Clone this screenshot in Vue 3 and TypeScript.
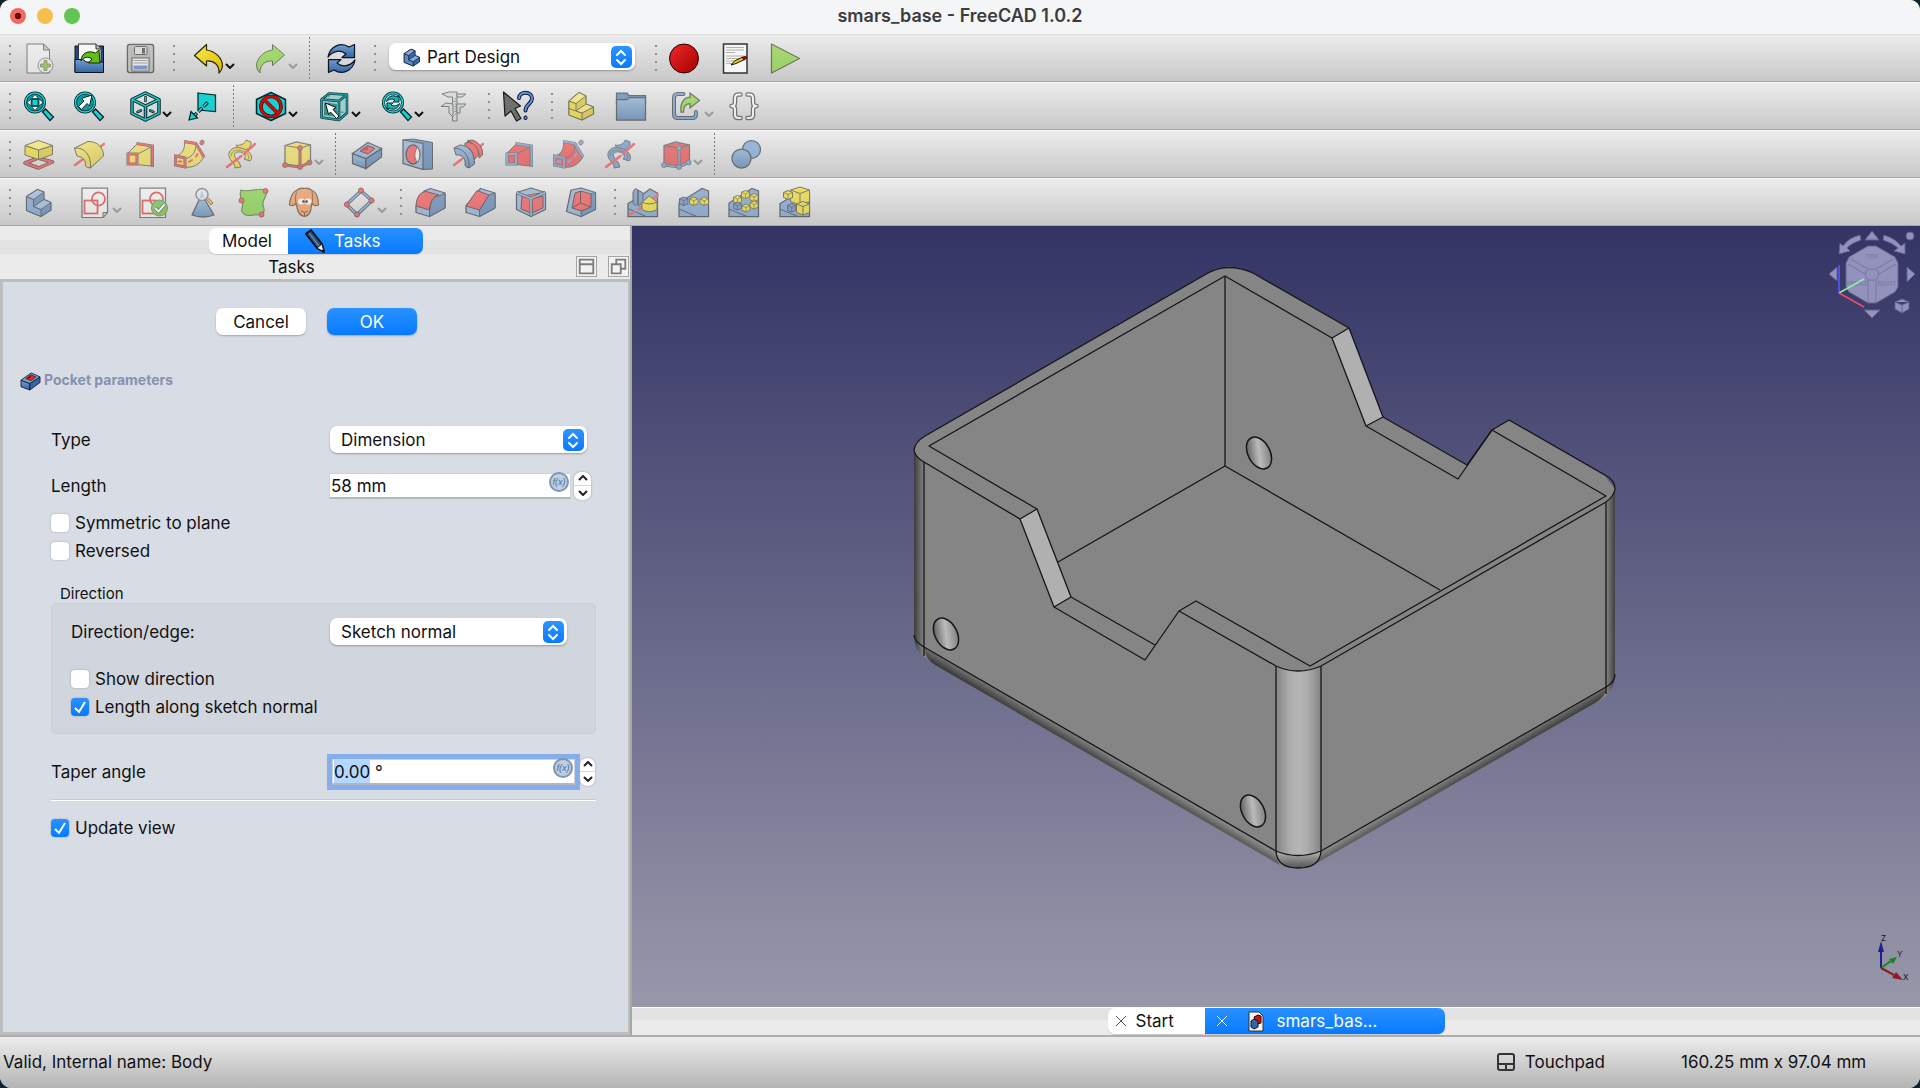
<script setup lang="ts">
import { onMounted, ref } from 'vue'

type ToolKind = 'grip' | 'sep' | 'tool' | 'menu' | 'workbench'

interface ToolItem {
  kind: ToolKind
  icon?: string
  label?: string
  off?: boolean
  tone?: 'sub'
}

const grip: ToolItem = { kind: 'grip' }
const sep: ToolItem = { kind: 'sep' }

function tool(icon: string, label: string, off = false, tone?: 'sub'): ToolItem {
  return { kind: 'tool', icon, label, off, tone }
}

function menu(icon: string, label: string, off = false, tone?: 'sub'): ToolItem {
  return { kind: 'menu', icon, label, off, tone }
}

const toolbars: ToolItem[][] = [
  [
    grip, tool('new', 'New', true), tool('open', 'Open'), tool('save', 'Save', true),
    grip, menu('undo', 'Undo'), menu('redo', 'Redo', true),
    sep, tool('refresh', 'Refresh'),
    grip, { kind: 'workbench' },
    grip, tool('record', 'Record macro'), tool('macro', 'Macros'), tool('play', 'Execute macro', true),
  ],
  [
    grip, tool('fit-all', 'Fit all'), tool('fit-sel', 'Fit selection'), menu('iso', 'Isometric'), tool('align', 'Align to selection'),
    sep, menu('draw-style', 'Draw style'), menu('bbox', 'Selection filter'), menu('zoom-sync', 'Sync view'), tool('caliper', 'Measure', true),
    grip, tool('whats-this', "What's this?"),
    grip, tool('part', 'Part', true), tool('folder', 'Group', true), menu('link', 'Make link', true), tool('braces', 'Variable set', true),
  ],
  [
    grip, tool('pad', 'Pad', true), tool('revolve', 'Revolution', true), tool('loft', 'Additive loft', true),
    tool('pipe', 'Additive pipe', true), tool('helix', 'Additive helix', true), menu('prim', 'Additive primitive', true),
    sep, tool('pocket', 'Pocket', true), tool('hole', 'Hole', true), tool('groove', 'Groove', true),
    tool('loft', 'Subtractive loft', true, 'sub'), tool('pipe', 'Subtractive pipe', true, 'sub'),
    tool('helix', 'Subtractive helix', true, 'sub'), menu('prim', 'Subtractive primitive', true, 'sub'),
    sep, tool('boolean', 'Boolean', true),
  ],
  [
    grip, tool('body', 'Body', true), menu('sketch', 'Sketch', true), tool('validate', 'Validate sketch', true),
    tool('check', 'Check geometry', true), tool('binder', 'Shape binder', true), tool('clone', 'Clone', true), menu('datum', 'Datum', true),
    grip, tool('fillet', 'Fillet', true), tool('chamfer', 'Chamfer', true), tool('draft', 'Draft', true), tool('thickness', 'Thickness', true),
    grip, tool('mirror', 'Mirrored', true), tool('linear', 'Linear pattern', true), tool('polar', 'Polar pattern', true), tool('multi', 'MultiTransform', true),
  ],
]

const length = ref('58 mm')
const taper = ref('0.00 °')
const symmetric = ref(false)
const reversed = ref(false)
const showDirection = ref(false)
const alongNormal = ref(true)
const updateView = ref(true)

const taperInput = ref<HTMLInputElement | null>(null)

onMounted(() => {
  taperInput.value?.focus({ preventScroll: true })
  taperInput.value?.setSelectionRange(0, 4)
})
</script>

<template>
  <div class="window">
    <svg class="defs" width="0" height="0" aria-hidden="true">
      <defs>
        <linearGradient id="g-blue" x1="0" y1="0" x2="0" y2="1"><stop offset="0" stop-color="#729fcf" /><stop offset="1" stop-color="#3465a4" /></linearGradient>
        <linearGradient id="g-red" x1="0" y1="0" x2="1" y2="1"><stop offset="0" stop-color="#ef2929" /><stop offset="1" stop-color="#a40000" /></linearGradient>
        <linearGradient id="g-yellow" x1="0" y1="0" x2="1" y2="1"><stop offset="0" stop-color="#fce94f" /><stop offset="1" stop-color="#d9bd00" /></linearGradient>
      </defs>

      <symbol id="i-new" viewBox="0 0 64 64">
        <path d="M8 4H41L53 16V62H8Z" fill="#f3f4f2" stroke="#2e3436" stroke-width="2" />
        <path d="M41 4V16H53Z" fill="#babdb6" stroke="#2e3436" stroke-width="2" />
        <circle cx="45" cy="47" r="15" fill="#f4f4f4" stroke="#555753" stroke-width="2" />
        <path d="M42 37h6v7h7v6h-7v7h-6v-7h-7v-6h7Z" fill="#73b216" stroke="#33521a" stroke-width="1.500" />
      </symbol>
      <symbol id="i-open" viewBox="0 0 64 64">
        <path d="M4 8H61V60H4Z" fill="#204a87" stroke="#0b1521" stroke-width="2" />
        <path d="M11 4H46L56 14V44H11Z" fill="#f6f6f6" stroke="#2e3436" stroke-width="2" />
        <path d="M46 4V14H56" fill="#babdb6" stroke="#2e3436" stroke-width="2" />
        <path d="M4 35H20L26 40H61V61H4Z" fill="url(#g-blue)" stroke="#0b1521" stroke-width="2" />
        <path d="M16 38C17 22 30 16 45 22L52 16L54 42H31L38 34C30 28 22 30 16 38Z" fill="#5fbf12" stroke="#172a04" stroke-width="2" />
      </symbol>
      <symbol id="i-save" viewBox="0 0 64 64">
        <rect x="7" y="5" width="52" height="56" rx="4" fill="#9c9f9a" stroke="#111" stroke-width="3" />
        <rect x="10" y="8" width="46" height="50" rx="2" fill="none" stroke="#d3d7cf" stroke-width="1.500" />
        <rect x="21" y="9" width="25" height="16" rx="2" fill="#d3d7cf" stroke="#111" stroke-width="2" />
        <rect x="36" y="12" width="6" height="11" fill="#111" />
        <rect x="16" y="32" width="34" height="26" fill="#f3f3f3" stroke="#111" stroke-width="2" />
        <path d="M19 37H47M19 42H47" stroke="#777" stroke-width="2" />
        <rect x="19" y="47" width="28" height="8" fill="#3465c4" />
      </symbol>
      <symbol id="i-undo" viewBox="0 0 64 64">
        <path d="M5 27L29 5V16C46 18 61 32 61 48Q60 57 54 62C55 46 44 37 29 38V48Z" fill="url(#g-yellow)" stroke="#302b00" stroke-width="2.500" stroke-linejoin="round" />
      </symbol>
      <symbol id="i-redo" viewBox="0 0 64 64">
        <path d="M59 26L35 5V16C18 18 3 32 3 48Q4 57 10 62C9 46 20 37 35 38V47Z" fill="#73d216" stroke="#172a04" stroke-width="2" stroke-linejoin="round" />
      </symbol>
      <symbol id="i-refresh" viewBox="0 0 64 64">
        <path d="M6 30C10 8 32 -1 48 10L59 5V31H34L42 24C32 15 16 17 6 30Z" fill="url(#g-blue)" stroke="#0b1521" stroke-width="2.500" stroke-linejoin="round" />
        <path d="M60 36C56 58 34 67 18 56L7 61V35H32L24 42C34 51 50 49 60 36Z" fill="url(#g-blue)" stroke="#0b1521" stroke-width="2.500" stroke-linejoin="round" />
      </symbol>
      <symbol id="i-record" viewBox="0 0 64 64">
        <circle cx="32" cy="33" r="29" fill="url(#g-red)" stroke="#280000" stroke-width="2" />
      </symbol>
      <symbol id="i-macro" viewBox="0 0 64 64">
        <path d="M9 4H56V62H9Z" fill="#f6f6f4" stroke="#2e3436" stroke-width="3" />
        <path d="M14 11H50M14 16H50M14 21H32M14 28H50M14 33H50M14 38H42M14 43H26" stroke="#999" stroke-width="1.500" />
        <path d="M24 46L31 38L48 30L51 35L34 43Z" fill="#edd400" stroke="#111" stroke-width="2" />
        <path d="M46 31L53 28L56 32L50 36Z" fill="#cc0000" stroke="#280000" stroke-width="1.500" />
      </symbol>
      <symbol id="i-play" viewBox="0 0 64 64">
        <path d="M5 4L61 33L5 62Z" fill="#73d216" stroke="#172a04" stroke-width="2.500" stroke-linejoin="round" />
      </symbol>

      <symbol id="i-fit-all" viewBox="0 0 64 64">
        <path d="M39 44L45 38L61 54L54 61Z" fill="#16d0d2" stroke="#06262a" stroke-width="2.500" />
        <circle cx="24" cy="25" r="19" fill="#0c9c9f" stroke="#06262a" stroke-width="6" />
        <circle cx="24" cy="25" r="19" fill="none" stroke="#16d0d2" stroke-width="3" />
        <path d="M24 9L31 17H17ZM24 41L31 33H17ZM8 25L16 18V32ZM40 25L32 18V32Z" fill="#fff" stroke="#06262a" stroke-width="1.500" />
        <rect x="18" y="19" width="12" height="12" fill="#16d0d2" stroke="#06262a" stroke-width="1.500" />
      </symbol>
      <symbol id="i-fit-sel" viewBox="0 0 64 64">
        <path d="M39 44L45 38L61 54L54 61Z" fill="#16d0d2" stroke="#06262a" stroke-width="2.500" />
        <circle cx="24" cy="25" r="19" fill="#0c9c9f" stroke="#06262a" stroke-width="6" />
        <circle cx="24" cy="25" r="19" fill="none" stroke="#16d0d2" stroke-width="3" />
        <path d="M11 33L22 22L17 17L38 10L33 32L28 27L17 39Z" fill="#fff" stroke="#06262a" stroke-width="2" />
      </symbol>
      <symbol id="i-iso" viewBox="0 0 64 64">
        <g fill="none" stroke-linejoin="round">
          <path d="M33 6L60 19V47L33 60L6 47V19ZM6 19L33 32L60 19M33 32V60" stroke="#06262a" stroke-width="7" />
          <path d="M33 6L60 19V47L33 60L6 47V19ZM6 19L33 32L60 19M33 32V60" stroke="#25bfc1" stroke-width="3" />
          <path d="M33 14V22M17 44L24 41M42 41L49 44" stroke="#06262a" stroke-width="5" stroke-linecap="round" />
          <path d="M33 14V22M17 44L24 41M42 41L49 44" stroke="#25bfc1" stroke-width="2" stroke-linecap="round" />
        </g>
      </symbol>
      <symbol id="i-align" viewBox="0 0 64 64">
        <path d="M24 6L59 10V43L24 40Z" fill="#16d0d2" stroke="#06262a" stroke-width="2.500" />
        <path d="M43 25L18 50" stroke="#06262a" stroke-width="7" stroke-dasharray="11 4" />
        <path d="M42 26L18 50" stroke="#34e0e2" stroke-width="3" stroke-dasharray="9 6" />
        <path d="M6 60L10 43L23 56Z" fill="#16d0d2" stroke="#06262a" stroke-width="2.500" />
      </symbol>
      <symbol id="i-draw-style" viewBox="0 0 64 64">
        <path d="M32 5L61 19V47L32 61L3 47V19Z" fill="#16d0d2" stroke="#06262a" stroke-width="3" stroke-linejoin="round" />
        <circle cx="32" cy="33" r="20" fill="none" stroke="#280000" stroke-width="7" />
        <path d="M18 19L46 47" stroke="#280000" stroke-width="7" />
        <circle cx="32" cy="33" r="20" fill="none" stroke="#d40808" stroke-width="5" />
        <path d="M18 19L46 47" stroke="#d40808" stroke-width="5" />
      </symbol>
      <symbol id="i-bbox" viewBox="0 0 64 64">
        <path d="M7 19L22 7L58 9V46L42 60L7 55Z" fill="#a3cccc" />
        <path d="M12 25L38 28V54L12 50Z" fill="#3a8f90" />
        <g fill="none" stroke-linejoin="round">
          <path d="M7 19L22 7L58 9V46L42 60L7 55ZM7 19L42 22L58 9M42 22V60" stroke="#06262a" stroke-width="5" />
          <path d="M7 19L22 7L58 9V46L42 60L7 55ZM7 19L42 22L58 9M42 22V60" stroke="#1f9c9e" stroke-width="3" />
          <path d="M22 9V42L8 54M22 42L57 45" stroke="#1f7c7e" stroke-width="2" stroke-dasharray="5 3" />
        </g>
        <path d="M15 26L36 35L30 39L42 52L37 57L25 44L21 49Z" fill="#fff" stroke="#111" stroke-width="2" />
      </symbol>
      <symbol id="i-zoom-sync" viewBox="0 0 64 64">
        <path d="M39 44L45 38L61 54L54 61Z" fill="#16d0d2" stroke="#06262a" stroke-width="2.500" />
        <circle cx="24" cy="25" r="19" fill="#d8f4f4" stroke="#06262a" stroke-width="6" />
        <circle cx="24" cy="25" r="19" fill="none" stroke="#16d0d2" stroke-width="3" />
        <path d="M11 23C13 12 25 9 32 14L36 11V24H24L28 20C22 17 16 18 11 23Z" fill="#1fb2b4" stroke="#06262a" stroke-width="2" />
        <path d="M37 27C35 38 23 41 16 36L12 39V26H24L20 30C26 33 32 32 37 27Z" fill="#1fb2b4" stroke="#06262a" stroke-width="2" />
      </symbol>
      <symbol id="i-caliper" viewBox="0 0 64 64">
        <g fill="#d3d7cf" stroke="#2e3436" stroke-width="2">
          <path d="M6 8L20 4H36V62H27V14H18Z" />
          <path d="M36 8H54L46 14H36ZM14 26L4 33H20V46L28 54V28ZM36 28H54L48 34H42V46H36Z" />
        </g>
        <path d="M31 18H35M29 23H35M31 28H35M31 33H35M31 38H35M31 43H35M31 48H35" stroke="#2e3436" stroke-width="1.500" />
      </symbol>
      <symbol id="i-whats-this" viewBox="0 0 64 64">
        <path d="M3 4L37 32L26 37L38 57L29 62L18 42L6 52Z" fill="#6d706b" stroke="#1b1d1c" stroke-width="2.500" stroke-linejoin="round" />
        <g fill="none" stroke-linecap="round">
          <path d="M34 16C34 2 60 2 60 17C60 28 47 28 47 41M47 55V56" stroke="#0b1a38" stroke-width="8" />
          <path d="M34 16C34 2 60 2 60 17C60 28 47 28 47 41M47 55V56" stroke="#5f92d3" stroke-width="4" />
        </g>
      </symbol>
      <symbol id="i-folder" viewBox="0 0 64 64">
        <path d="M3 6H24L28 11H61V26H3Z" fill="#3465a4" stroke="#0b1521" stroke-width="2.500" />
        <path d="M3 19H24L29 15H61V60H3Z" fill="url(#g-blue)" stroke="#0b1521" stroke-width="2.500" />
      </symbol>
      <symbol id="i-link" viewBox="0 0 64 64">
        <g fill="none" stroke-linecap="round">
          <path d="M25 8H14Q6 8 6 16V48Q6 56 14 56H42Q50 56 50 48V44" stroke="#0b1521" stroke-width="8" />
          <path d="M25 8H14Q6 8 6 16V48Q6 56 14 56H42Q50 56 50 48V44" stroke="#4c83c4" stroke-width="4" />
        </g>
        <path d="M20 44C18 24 27 14 38 15V6L57 21L38 36V27C29 27 25 34 25 44Z" fill="#73d216" stroke="#172a04" stroke-width="2.500" />
      </symbol>
      <symbol id="i-braces" viewBox="0 0 64 64">
        <g fill="none" stroke-linecap="round" stroke-linejoin="round">
          <path d="M25 9H21Q14 9 14 16V25Q14 32 7 32Q14 32 14 39V50Q14 56 21 56H25M39 9H43Q50 9 50 16V25Q50 32 57 32Q50 32 50 39V50Q50 56 43 56H39" stroke="#222" stroke-width="9" />
          <path d="M25 9H21Q14 9 14 16V25Q14 32 7 32Q14 32 14 39V50Q14 56 21 56H25M39 9H43Q50 9 50 16V25Q50 32 57 32Q50 32 50 39V50Q50 56 43 56H39" stroke="#fff" stroke-width="4" />
        </g>
      </symbol>

      <symbol id="i-pad" viewBox="0 0 64 64">
        <path d="M4 50L30 40L59 48L31 60Z" fill="none" stroke="#280000" stroke-width="7" stroke-linejoin="round" />
        <path d="M4 50L30 40L59 48L31 60Z" fill="none" stroke="#ef2929" stroke-width="4" stroke-linejoin="round" />
        <path d="M4 15V34L31 43V24Z" fill="#edd400" stroke="#302b00" stroke-width="2" />
        <path d="M59 15V33L31 43V24Z" fill="#d9bd00" stroke="#302b00" stroke-width="2" />
        <path d="M31 5L59 15L31 24L4 15Z" fill="#fce94f" stroke="#302b00" stroke-width="2" />
      </symbol>
      <symbol id="i-revolve" viewBox="0 0 64 64">
        <path d="M4 54L62 12" stroke="#ef2929" stroke-width="5" stroke-linecap="round" />
        <path d="M3 20L30 7C50 6 62 22 61 36L35 60Q29 60 25 56C26 44 20 38 8 36Z" fill="url(#g-yellow)" stroke="#302b00" stroke-width="2" stroke-linejoin="round" />
        <path d="M3 20C24 18 37 36 35 60" fill="none" stroke="#302b00" stroke-width="2" />
      </symbol>
      <symbol id="i-loft" viewBox="0 0 64 64">
        <path d="M7 31L26 12L54 17V56L26 53Z" fill="var(--body)" stroke="#333" stroke-width="2" />
        <path d="M25 11L57 16V58" fill="none" stroke="#333" stroke-width="6" />
        <path d="M25 11L57 16V57" fill="none" stroke="var(--edge)" stroke-width="4" />
        <path d="M26 33L54 18" stroke="#333" stroke-width="2" />
        <rect x="8" y="32" width="18" height="20" fill="var(--body)" stroke="#333" stroke-width="6" />
        <rect x="8" y="32" width="18" height="20" fill="none" stroke="var(--edge)" stroke-width="4" />
      </symbol>
      <symbol id="i-pipe" viewBox="0 0 64 64">
        <path d="M4 36C18 32 22 20 21 8L44 12L60 38C50 54 38 60 22 58Z" fill="var(--body)" stroke="#333" stroke-width="2" />
        <path d="M22 42C38 38 44 26 44 12" fill="none" stroke="#333" stroke-width="2" />
        <path d="M20 7L44 11L60 38" fill="none" stroke="#333" stroke-width="6" stroke-linejoin="round" />
        <path d="M20 7L44 11L60 38" fill="none" stroke="var(--edge)" stroke-width="4" stroke-linejoin="round" />
        <path d="M3 36L22 40V58L3 54Z" fill="var(--body)" stroke="#333" stroke-width="6" />
        <path d="M3 36L22 40V58L3 54Z" fill="none" stroke="var(--edge)" stroke-width="4" />
        <path d="M9 47H15M30 48L36 44M44 37L47 32" stroke="var(--edge)" stroke-width="4" stroke-linecap="round" />
        <ellipse cx="56" cy="9" rx="4" ry="5" fill="var(--edge)" stroke="#333" stroke-width="1.500" transform="rotate(25 56 9)" />
      </symbol>
      <symbol id="i-helix" viewBox="0 0 64 64">
        <path d="M22 14C30 16 40 12 42 4L52 8C54 18 44 26 30 26Z" fill="var(--coil)" stroke="#333" stroke-width="2" />
        <path d="M8 36C6 24 18 16 32 20C50 24 58 38 50 46L38 42C46 34 34 26 24 28C16 30 18 40 28 48L32 58L20 60C22 52 10 46 8 36Z" fill="var(--coil)" stroke="#333" stroke-width="2" />
        <path d="M13 36C12 26 22 22 32 25C44 28 51 36 46 43" fill="none" stroke="#333" stroke-width="1.500" />
        <path d="M4 58L33 36M38 32L60 12" stroke="#ef2929" stroke-width="5" stroke-linecap="round" />
      </symbol>
      <symbol id="i-prim" viewBox="0 0 64 64">
        <path d="M8 15L31 8L59 14V50L38 58L8 52Z" fill="var(--body)" stroke="#333" stroke-width="2.500" />
        <path d="M8 15L38 20L59 14" fill="none" stroke="#333" stroke-width="2" />
        <path d="M38 20V58M8 54L38 58L57 49" fill="none" stroke="#333" stroke-width="6" />
        <path d="M38 20V58M8 54L38 58L57 49" fill="none" stroke="var(--edge)" stroke-width="3" />
        <g fill="var(--edge)" stroke="#333" stroke-width="1.500"><circle cx="38" cy="20" r="5" /><circle cx="8" cy="54" r="5" /><circle cx="38" cy="58" r="5" /><circle cx="57" cy="49" r="5" /></g>
      </symbol>
      <symbol id="i-pocket" viewBox="0 0 64 64">
        <path d="M3 31L30 41V61L3 51Z" fill="url(#g-blue)" stroke="#0b1521" stroke-width="2.500" />
        <path d="M30 41L61 21V38L30 61Z" fill="#3465a4" stroke="#0b1521" stroke-width="2.500" />
        <path d="M34 9L61 21L30 41L3 31Z" fill="#729fcf" stroke="#0b1521" stroke-width="2.500" />
        <path d="M33 15L48 21L34 32L18 26Z" fill="#ef2929" stroke="#280000" stroke-width="2" />
        <path d="M33 15L34 24L18 26Z" fill="#a40000" />
      </symbol>
      <symbol id="i-hole" viewBox="0 0 64 64">
        <path d="M2 4L22 2L61 9V62L42 63Z" fill="#3465a4" stroke="#0b1521" stroke-width="2" />
        <path d="M2 4L42 11V63L2 51Z" fill="#729fcf" stroke="#0b1521" stroke-width="2.500" />
        <ellipse cx="22" cy="33" rx="14" ry="19" fill="#ef2929" stroke="#280000" stroke-width="2.500" />
        <path d="M31 19C24 27 24 42 31 48C37 41 37 26 31 19Z" fill="#f4f4f4" stroke="#280000" stroke-width="1.500" />
      </symbol>
      <symbol id="i-groove" viewBox="0 0 64 64">
        <path d="M4 54L20 42M50 22L62 12" stroke="#ef2929" stroke-width="5" stroke-linecap="round" />
        <path d="M26 10C40 6 54 16 56 30L44 44C42 26 36 18 26 18Z" fill="#ef2929" stroke="#280000" stroke-width="2" />
        <path d="M30 6L40 4C54 8 62 20 61 34L54 40C56 24 46 10 30 6Z" fill="#ef2929" stroke="#280000" stroke-width="2" />
        <path d="M4 20L16 14C34 14 46 32 45 52L34 60Q26 58 26 54C28 42 20 32 8 34Z" fill="url(#g-blue)" stroke="#0b1521" stroke-width="2" />
        <path d="M4 20C24 20 36 38 34 60" fill="none" stroke="#0b1521" stroke-width="2" />
      </symbol>
      <symbol id="i-boolean" viewBox="0 0 64 64">
        <circle cx="43" cy="23" r="18" fill="#5f92cc" stroke="#0b1521" stroke-width="2.500" />
        <circle cx="23" cy="41" r="19" fill="url(#g-blue)" stroke="#0b1521" stroke-width="2.500" />
      </symbol>

      <symbol id="i-body" viewBox="0 0 64 64">
        <path d="M29 7L42 12V27L56 33V48L36 61L7 49V21Z" fill="#3465a4" stroke="#0b1521" stroke-width="2.500" stroke-linejoin="round" />
        <path d="M7 21L21 27V41L36 47V61L7 49Z" fill="#5b8ac4" stroke="#0b1521" stroke-width="2" />
        <path d="M7 21L29 7L42 12L21 27ZM21 41L42 27L56 33L36 47Z" fill="#82aad6" stroke="#0b1521" stroke-width="2" />
      </symbol>
      <symbol id="i-part" viewBox="0 0 64 64">
        <path d="M8 22L28 5L42 12V28L57 34V48L34 60L8 50Z" fill="#d9bd00" stroke="#302b00" stroke-width="2.500" stroke-linejoin="round" />
        <path d="M8 22L22 27V42L34 46V60L8 50ZM8 37L22 42" fill="#edd400" stroke="#302b00" stroke-width="2" />
        <path d="M8 22L28 5L42 12L22 27ZM22 42L42 28L57 34L34 46Z" fill="#fce94f" stroke="#302b00" stroke-width="2" />
      </symbol>
      <symbol id="i-sketch" viewBox="0 0 64 64">
        <path d="M6 4H57V53L48 63H6Z" fill="#f6f6f6" stroke="#2e3436" stroke-width="2.500" />
        <path d="M48 63V53H57Z" fill="#babdb6" stroke="#2e3436" stroke-width="2" />
        <circle cx="39" cy="26" r="13" fill="none" stroke="#e01010" stroke-width="3.500" />
        <rect x="11" y="29" width="26" height="26" fill="none" stroke="#e01010" stroke-width="3.500" />
      </symbol>
      <symbol id="i-validate" viewBox="0 0 64 64">
        <path d="M6 4H57V63H6Z" fill="#f6f6f6" stroke="#2e3436" stroke-width="2.500" />
        <circle cx="39" cy="26" r="13" fill="none" stroke="#e01010" stroke-width="3.500" />
        <rect x="11" y="29" width="26" height="26" fill="none" stroke="#e01010" stroke-width="3.500" />
        <circle cx="45" cy="44" r="16" fill="#4eb51a" stroke="#2c6b10" stroke-width="2" />
        <path d="M36 44L43 51L55 37" fill="none" stroke="#172a04" stroke-width="7" />
        <path d="M36 44L43 51L55 37" fill="none" stroke="#fff" stroke-width="4" />
      </symbol>
      <symbol id="i-check" viewBox="0 0 64 64">
        <path d="M24 28H36L54 58Q32 66 10 58Z" fill="url(#g-blue)" stroke="#0b1521" stroke-width="2.500" stroke-linejoin="round" />
        <path d="M38 26L42 23L52 34L48 38Z" fill="#f0a020" stroke="#5c3500" stroke-width="2" />
        <circle cx="30" cy="17" r="12" fill="#dfe9f3" stroke="#555753" stroke-width="3" />
        <path d="M30 9L24 24H36Z" fill="#9fc0e0" />
      </symbol>
      <symbol id="i-binder" viewBox="0 0 64 64">
        <path d="M6 8C20 14 40 2 56 8C62 20 46 28 50 38C54 48 52 56 46 58C34 54 18 66 8 52C6 44 12 38 8 30C4 22 4 14 6 8Z" fill="#66c817" stroke="#2d5a0c" stroke-width="2.500" />
        <g fill="#ef2929" stroke="#7a1010" stroke-width="2"><circle cx="55" cy="10" r="5" /><circle cx="7" cy="29" r="5" /><circle cx="47" cy="57" r="5" /></g>
      </symbol>
      <symbol id="i-clone" viewBox="0 0 64 64">
        <path d="M17 9C8 12 3 28 3 38Q10 42 16 35L20 50Q24 60 33 61Q41 60 45 50L48 35Q54 42 61 38C61 26 57 12 48 9Q41 3 33 5Q24 3 17 9Z" fill="#f08030" stroke="#402000" stroke-width="2.500" stroke-linejoin="round" />
        <path d="M17 11Q13 24 16 35M48 11Q51 24 48 35" fill="none" stroke="#402000" stroke-width="2" />
        <ellipse cx="27" cy="31" rx="7" ry="6" fill="#fff" /><ellipse cx="40" cy="31" rx="7" ry="6" fill="#fff" />
        <circle cx="31" cy="31" r="3" fill="#111" /><circle cx="37" cy="31" r="3" fill="#111" />
        <path d="M26 50Q33 56 40 50M33 54V60" fill="none" stroke="#402000" stroke-width="2" />
      </symbol>
      <symbol id="i-datum" viewBox="0 0 64 64">
        <path d="M34 10L56 29L26 57L5 37Z" fill="none" stroke="#0b1521" stroke-width="7" />
        <path d="M34 10L56 29L26 57L5 37Z" fill="none" stroke="#5f92cc" stroke-width="3.500" />
        <g fill="#ef2929" stroke="#5a0808" stroke-width="2"><circle cx="34" cy="9" r="5" /><circle cx="55" cy="29" r="5" /><circle cx="26" cy="57" r="5" /><circle cx="6" cy="37" r="5" /></g>
      </symbol>
      <symbol id="i-fillet" viewBox="0 0 64 64">
        <path d="M33 5L62 14V44L31 61L4 53V40L20 10Z" fill="#729fcf" stroke="#0b1521" stroke-width="2.500" stroke-linejoin="round" />
        <path d="M62 14V44L31 61V48C33 30 38 20 50 20Z" fill="#3465a4" stroke="#0b1521" stroke-width="2" />
        <path d="M4 40C5 22 12 12 24 11L50 18C38 20 32 32 31 48Z" fill="#ef2929" stroke="#280000" stroke-width="2" />
      </symbol>
      <symbol id="i-chamfer" viewBox="0 0 64 64">
        <path d="M33 5L62 14V44L31 61L4 53V40Z" fill="#729fcf" stroke="#0b1521" stroke-width="2.500" stroke-linejoin="round" />
        <path d="M62 14V44L31 61V48L50 18Z" fill="#3465a4" stroke="#0b1521" stroke-width="2" />
        <path d="M4 40L26 9L50 18L31 48Z" fill="#ef2929" stroke="#280000" stroke-width="2" />
      </symbol>
      <symbol id="i-draft" viewBox="0 0 64 64">
        <path d="M32 4L61 13V47L32 61L3 47V13Z" fill="#729fcf" stroke="#0b1521" stroke-width="2.500" stroke-linejoin="round" />
        <path d="M14 20L32 26V54L12 46ZM34 26L56 20V44L34 54Z" fill="#ef2929" stroke="#280000" stroke-width="2" />
        <path d="M14 20L50 14L32 25Z" fill="#ef2929" stroke="#280000" stroke-width="1.500" />
        <path d="M32 25V60M3 13L32 25L61 13" fill="none" stroke="#0b1521" stroke-width="6" />
        <path d="M32 25V60M3 13L32 25L61 13" fill="none" stroke="#729fcf" stroke-width="3" />
      </symbol>
      <symbol id="i-thickness" viewBox="0 0 64 64">
        <path d="M12 8L32 4L61 13V47L32 61L3 51Z" fill="#729fcf" stroke="#0b1521" stroke-width="2.500" stroke-linejoin="round" />
        <path d="M61 13V47L32 61V50L50 42V16Z" fill="#3465a4" stroke="#0b1521" stroke-width="1.500" />
        <path d="M20 14L32 10L52 16V42L32 50L14 44Z" fill="#ef2929" stroke="#280000" stroke-width="2" />
        <path d="M31 10V34L14 44M31 34L52 42" fill="none" stroke="#280000" stroke-width="2" />
      </symbol>
      <symbol id="i-mirror" viewBox="0 0 64 64">
        <path d="M2 61V35L24 22L46 6L61 14V61Z" fill="#5b8ac4" stroke="#0b1521" stroke-width="2.500" />
        <path d="M2 45L38 61M2 61L61 61" fill="none" stroke="#0b1521" stroke-width="2" />
        <path d="M6 57L14 51M24 46L32 40M54 24L62 18" stroke="#ef2929" stroke-width="5" stroke-linecap="round" />
        <path d="M12 12Q16 2 22 8V34Q16 42 12 34ZM22 8L32 14V32L22 40Z" fill="#4a7cb8" stroke="#0b1521" stroke-width="2" />
        <path d="M30 32V47Q45 56 60 47V32L45 20Z" fill="#edd400" stroke="#302b00" stroke-width="2" />
        <path d="M30 32Q45 40 60 32" fill="none" stroke="#302b00" stroke-width="2" />
      </symbol>
      <symbol id="i-cube-y" viewBox="0 0 20 20">
        <path d="M10 1L19 5V15L10 19L1 15V5Z" fill="#edd400" stroke="#302b00" stroke-width="2" />
        <path d="M1 5L10 9L19 5M10 9V19" fill="none" stroke="#302b00" stroke-width="1.500" />
      </symbol>
      <symbol id="i-cube-b" viewBox="0 0 20 20">
        <path d="M10 1L19 5V15L10 19L1 15V5Z" fill="#3f74b5" stroke="#0b1521" stroke-width="2" />
        <path d="M1 5L10 9L19 5M10 9V19" fill="none" stroke="#0b1521" stroke-width="1.500" />
      </symbol>
      <symbol id="i-linear" viewBox="0 0 64 64">
        <path d="M2 61V34L48 5L61 10V61Z" fill="#5b8ac4" stroke="#0b1521" stroke-width="2.500" />
        <path d="M2 46L38 61" stroke="#0b1521" stroke-width="2" />
        <use href="#i-cube-b" x="2" y="21" width="19" height="19" /><use href="#i-cube-y" x="22" y="21" width="19" height="19" /><use href="#i-cube-y" x="43" y="21" width="19" height="19" />
      </symbol>
      <symbol id="i-polar" viewBox="0 0 64 64">
        <path d="M2 61V34L48 5L61 10V61Z" fill="#5b8ac4" stroke="#0b1521" stroke-width="2.500" />
        <path d="M2 46L38 61" stroke="#0b1521" stroke-width="2" />
        <use href="#i-cube-y" x="10" y="18" width="18" height="18" /><use href="#i-cube-y" x="26" y="8" width="18" height="18" /><use href="#i-cube-y" x="43" y="14" width="18" height="18" />
        <use href="#i-cube-y" x="43" y="29" width="18" height="18" /><use href="#i-cube-b" x="10" y="31" width="18" height="18" /><use href="#i-cube-y" x="27" y="35" width="18" height="18" />
      </symbol>
      <symbol id="i-multi" viewBox="0 0 64 64">
        <path d="M2 61V35L24 22L61 14V61Z" fill="#5b8ac4" stroke="#0b1521" stroke-width="2.500" />
        <path d="M2 46L38 61" stroke="#0b1521" stroke-width="2" />
        <g fill="#edd400" stroke="#302b00" stroke-width="2" stroke-linejoin="round">
          <path d="M42 2L61 8V31L42 38L23 31V8Z" /><path d="M23 8L42 15L61 8M42 15V38" fill="none" />
          <path d="M48 31L61 36V53L48 58L35 53V36Z" /><path d="M35 36L48 41L61 36M48 41V58" fill="none" />
        </g>
        <use href="#i-cube-y" x="8" y="8" width="20" height="20" /><use href="#i-cube-b" x="16" y="34" width="19" height="19" />
      </symbol>
    </svg>

    <header class="titlebar">
      <div class="lights">
        <button class="light close" aria-label="Close"></button>
        <button class="light minimize" aria-label="Minimize"></button>
        <button class="light zoom" aria-label="Zoom"></button>
      </div>
      <h1>smars_base - FreeCAD 1.0.2</h1>
    </header>

    <div v-for="(bar, b) in toolbars" :key="b" class="toolbar" role="toolbar">
      <template v-for="(item, i) in bar" :key="i">
        <span v-if="item.kind === 'grip'" class="grip"></span>
        <span v-else-if="item.kind === 'sep'" class="sep"></span>
        <div v-else-if="item.kind === 'workbench'" class="combo workbench">
          <svg class="wb-icon" viewBox="0 0 64 64"><use href="#i-body" /></svg>
          <select aria-label="Workbench"><option>Part Design</option></select>
          <span class="updown"><svg viewBox="0 0 21 22"><path d="M6 9L10 5L14 9M6 14L10 18L14 14" /></svg></span>
        </div>
        <button
          v-else
          :class="[item.kind, item.tone, { off: item.off }]"
          :aria-label="item.label"
          :disabled="item.off"
        >
          <svg class="icon" viewBox="0 0 64 64"><use :href="'#i-' + item.icon" /></svg>
          <svg v-if="item.kind === 'menu'" class="caret" viewBox="0 0 10 6"><path d="M1 1L5 5L9 1" /></svg>
        </button>
      </template>
    </div>

    <main class="work">
      <aside class="dock">
        <nav class="dock-tabs">
          <button class="seg model-tab">Model</button>
          <button class="seg tasks-tab active">
            <svg class="pencil" viewBox="0 0 22 26">
              <path d="M2 6L7 2L18 16L20 24L13 20Z" fill="#33547c" stroke="#0b1521" stroke-width="2" stroke-linejoin="round" />
              <path d="M5 5L15 18" stroke="#7f9cc0" stroke-width="1" />
              <path d="M13 20L18 16L20 24Z" fill="#f5f0e0" stroke="#0b1521" stroke-width="1" />
              <circle cx="19" cy="23" r="1.500" fill="#111" />
            </svg>
            Tasks
          </button>
        </nav>
        <div class="dock-title">
          <h2>Tasks</h2>
          <button class="dock-btn" aria-label="Overlay">
            <svg viewBox="0 0 21 21"><path d="M3 3H18V18H3ZM3 8H18" /></svg>
          </button>
          <button class="dock-btn" aria-label="Float">
            <svg viewBox="0 0 21 21"><path d="M8 8V3H18V13H13M3 8H13V18H3Z" /></svg>
          </button>
        </div>

        <form class="panel" @submit.prevent>
          <div class="actions">
            <button type="button" class="push">Cancel</button>
            <button type="submit" class="push primary">OK</button>
          </div>
          <h3 class="section"><svg viewBox="0 0 64 64"><use href="#i-pocket" /></svg>Pocket parameters</h3>

          <div class="fields">
            <div class="row">
              <label for="type">Type</label>
              <div class="combo wide">
                <select id="type"><option>Dimension</option></select>
                <span class="updown"><svg viewBox="0 0 21 22"><path d="M6 9L10 5L14 9M6 14L10 18L14 14" /></svg></span>
              </div>
            </div>
            <div class="row length-row">
              <label for="length">Length</label>
              <div class="spin">
                <div class="entry">
                  <input id="length" v-model="length" type="text">
                  <svg class="fx" viewBox="0 0 20 20"><circle cx="10" cy="10" r="9" /><text x="10" y="13">f(x)</text></svg>
                </div>
                <div class="stepper">
                  <button type="button" aria-label="Increase length"><svg viewBox="0 0 10 6"><path d="M1 5L5 1L9 5" /></svg></button>
                  <button type="button" aria-label="Decrease length"><svg viewBox="0 0 10 6"><path d="M1 1L5 5L9 1" /></svg></button>
                </div>
              </div>
            </div>
            <label class="check"><input v-model="symmetric" type="checkbox">Symmetric to plane</label>
            <label class="check"><input v-model="reversed" type="checkbox">Reversed</label>

            <div class="legend">Direction</div>
            <div class="group" role="group" aria-label="Direction">
              <div class="row">
                <label for="edge">Direction/edge:</label>
                <div class="combo">
                  <select id="edge"><option>Sketch normal</option></select>
                  <span class="updown"><svg viewBox="0 0 21 22"><path d="M6 9L10 5L14 9M6 14L10 18L14 14" /></svg></span>
                </div>
              </div>
              <label class="check"><input v-model="showDirection" type="checkbox">Show direction</label>
              <label class="check"><input v-model="alongNormal" type="checkbox">Length along sketch normal</label>
            </div>

            <div class="row taper-row">
              <label for="taper">Taper angle</label>
              <div class="spin focused">
                <div class="entry">
                  <input id="taper" ref="taperInput" v-model="taper" type="text">
                  <svg class="fx" viewBox="0 0 20 20"><circle cx="10" cy="10" r="9" /><text x="10" y="13">f(x)</text></svg>
                </div>
                <div class="stepper">
                  <button type="button" aria-label="Increase angle"><svg viewBox="0 0 10 6"><path d="M1 5L5 1L9 5" /></svg></button>
                  <button type="button" aria-label="Decrease angle"><svg viewBox="0 0 10 6"><path d="M1 1L5 5L9 1" /></svg></button>
                </div>
              </div>
            </div>
            <hr>
            <label class="check"><input v-model="updateView" type="checkbox">Update view</label>
          </div>
        </form>
      </aside>

      <section class="mdi">
        <div class="view">
          <svg class="scene" viewBox="632 226 1288 781" preserveAspectRatio="xMidYMid meet" role="img" aria-label="3D model">
            <defs>
              <linearGradient id="m-left" x1="0" x2="1"><stop offset="0" stop-color="#3c3c3c" /><stop offset="1" stop-color="#858585" /></linearGradient>
              <linearGradient id="m-right" x1="0" x2="1"><stop offset="0" stop-color="#858585" /><stop offset="1" stop-color="#404040" /></linearGradient>
              <linearGradient id="m-front" x1="0" x2="1"><stop offset="0" stop-color="#858585" /><stop offset=".3" stop-color="#acacac" /><stop offset=".5" stop-color="#b6b6b6" /><stop offset=".7" stop-color="#acacac" /><stop offset="1" stop-color="#858585" /></linearGradient>
              <linearGradient id="m-edge-l" gradientUnits="userSpaceOnUse" x1="1100" y1="749" x2="1094" y2="759"><stop offset="0" stop-color="#858585" /><stop offset="1" stop-color="#3c3c3c" /></linearGradient>
              <linearGradient id="m-edge-r" gradientUnits="userSpaceOnUse" x1="1463" y1="768" x2="1469" y2="778"><stop offset="0" stop-color="#858585" /><stop offset="1" stop-color="#3c3c3c" /></linearGradient>
              <linearGradient id="m-ball" x1="0" y1="0" x2="0" y2="1"><stop offset="0" stop-color="#b4b4b4" /><stop offset="1" stop-color="#555" /></linearGradient>
              <linearGradient id="m-hole" x1="0" y1=".2" x2="1" y2=".8"><stop offset="0" stop-color="#555" /><stop offset=".5" stop-color="#bbb" /><stop offset="1" stop-color="#777" /></linearGradient>
            </defs>
            <path d="M914 450V635Q914 650 925 657L935 665L1276 863Q1298 873 1319 862L1595 703Q1615 695 1615 674V489L1605 476L1509 420L1492 430L1467 465L1383 417L1349 328L1253 273Q1228 260 1208 273L925 436Q914 442 914 450Z" fill="#858585" />
            <path d="M914 450Q915 457 924 462V657Q914 650 914 635Z" fill="url(#m-left)" />
            <path d="M1606 502Q1614 496 1615 489V674Q1615 688 1606 696Z" fill="url(#m-right)" />
            <path d="M924 647L1276 851Q1276 858 1280 865L935 665Q925 659 924 647Z" fill="url(#m-edge-l)" />
            <path d="M1321 851L1606 687Q1607 696 1595 703L1315 864Q1320 858 1321 851Z" fill="url(#m-edge-r)" />
            <path d="M1276 666Q1298 676 1321 666V851Q1298 860 1276 851Z" fill="url(#m-front)" />
            <path d="M1276 851Q1298 860 1321 851Q1320 868 1298 868Q1277 868 1276 851Z" fill="url(#m-ball)" />
            <path d="M1020 519L1037 509L1071 597L1054 607ZM1332 338L1349 328L1383 417L1366 426Z" fill="#b0b0b0" />
            <g fill="none" stroke="#161616" stroke-width="1.300" stroke-linejoin="round">
              <path d="M914 450Q915 442 925 436L1208 273Q1228 262 1253 273L1349 328L1383 417L1467 465L1492 430L1509 420L1605 475Q1615 480 1615 489Q1614 496 1606 502L1321 666Q1298 676 1276 666L1179 611L1145 660L1054 607L1020 519L924 462Q915 457 914 450Z" />
              <path d="M1179 611L1196 601L1310 666L1606 496L1492 430L1458 479L1366 426L1332 338L1225 276L929 446L1037 509L1071 597L1155 645" />
              <path d="M1020 519L1037 509M1054 607L1071 597M1332 338L1349 328M1366 426L1383 417" />
              <path d="M1225 276V466L1058 562M1225 466L1440 590" />
              <path d="M924 462V656M1276 666V851M1321 666V851M1606 502V694" />
              <path d="M914 635Q914 641 924 647L1276 851Q1298 860 1321 851L1606 687Q1615 682 1615 674" />
              <path d="M1276 851Q1277 868 1298 868Q1320 868 1321 851" />
            </g>
            <g fill="url(#m-hole)" stroke="#161616" stroke-width="1.500">
              <ellipse cx="1259" cy="453" rx="11" ry="17" transform="rotate(-28 1259 453)" />
              <ellipse cx="946" cy="634" rx="11" ry="17" transform="rotate(-28 946 634)" />
              <ellipse cx="1253" cy="811" rx="11" ry="17" transform="rotate(-28 1253 811)" />
            </g>
          </svg>

          <svg class="navcube" viewBox="0 0 100 100" aria-label="Navigation cube">
            <g fill="#9292bd" stroke="#62628e" stroke-width="1">
              <path d="M45 14L52 5L59 14ZM9 48L17 41V55ZM87 41L95 48L87 56ZM44 84H60L52 92Z" />
              <path d="M40 9Q28 12 23 20L20 17L19 28L30 25L27 22Q31 17 41 14ZM64 9Q76 13 81 20L85 17V28L74 25L78 22Q73 17 63 14Z" />
              <circle cx="90" cy="10" r="4" />
              <path d="M75 76L82 73L89 76V83L82 87L75 83ZM75 76L82 79L89 76M82 79V87" />
              <path d="M48 20H56L75 31L78 37V61L75 66L56 77H48L29 66L26 61V37L29 31Z" />
              <path d="M48 43H56L59 48L56 54H48L45 48ZM48 54V76M56 54V76M45 48L28 38M48 43L31 33M59 48L76 38M56 43L73 33" fill="none" stroke="#7676a4" />
            </g>
            <g class="cube-text"><text x="52" y="33">TOP</text><text x="37" y="60">FRONT</text><text x="67" y="60">RIGHT</text></g>
            <path d="M19 39V67" stroke="#5a5aff" stroke-width="1.500" />
            <path d="M19 67L44 53" stroke="#8cf0a0" stroke-width="1.500" />
            <path d="M19 67L44 81" stroke="#e8506c" stroke-width="1.500" />
          </svg>

          <svg class="axes" viewBox="0 0 44 56" aria-label="Axis cross">
            <path d="M11 36V14" stroke="#1f1f90" stroke-width="2" /><path d="M11 9L14 20H8Z" fill="#1f1f90" />
            <path d="M11 36L21 29" stroke="#178717" stroke-width="2" /><path d="M27 25L23 32L19 27Z" fill="#178717" />
            <path d="M11 36L24 43" stroke="#901c1c" stroke-width="2" /><path d="M33 48L22 46L26 40Z" fill="#901c1c" />
            <text x="11" y="9">Z</text><text x="27" y="25">Y</text><text x="33" y="48">X</text>
          </svg>
        </div>

        <nav class="doc-tabs">
          <div class="seg doc">
            <button class="tab-close" aria-label="Close Start"><svg viewBox="0 0 12 12"><path d="M1 1L11 11M11 1L1 11" /></svg></button>
            <button class="tab-name">Start</button>
          </div>
          <div class="seg doc active">
            <button class="tab-close" aria-label="Close smars_base"><svg viewBox="0 0 12 12"><path d="M1 1L11 11M11 1L1 11" /></svg></button>
            <svg class="doc-icon" viewBox="0 0 16 21">
              <path d="M1 1H11L15 5V20H1Z" fill="#f6f6f6" stroke="#333" stroke-width="1" />
              <path d="M6 6L10 4L13 5V12L9 13Z" fill="#d01010" stroke="#280000" stroke-width="1" />
              <path d="M3 10L6 8L10 10V16L6 18L3 16Z" fill="#3465a4" stroke="#0b1521" stroke-width="1" />
            </svg>
            <button class="tab-name">smars_bas...</button>
          </div>
        </nav>
      </section>
    </main>

    <footer class="status">
      <span class="message">Valid, Internal name: Body</span>
      <button class="nav-style">
        <svg viewBox="0 0 18 18"><path d="M3 1H15Q17 1 17 3V15Q17 17 15 17H3Q1 17 1 15V3Q1 1 3 1ZM1 11H17M9 11V17" /></svg>
        Touchpad
      </button>
      <span class="size">160.25 mm x 97.04 mm</span>
    </footer>
  </div>
</template>

<style>
body {
  background: #10222e;
}
</style>

<style scoped>
.window {
  display: flex;
  flex-direction: column;
  min-height: 100vh;
  overflow: hidden;
  border-radius: 10px 10px 12px 12px;
  background: #ebebeb;
  color: #111;
  font: 17px/24px Inter, "Liberation Sans", sans-serif;
}

.window *,
.window *::before,
.window *::after {
  box-sizing: border-box;
}

.defs {
  position: absolute;
}

button,
select,
input {
  margin: 0;
  padding: 0;
  border: 0;
  background: none;
  color: inherit;
  font: inherit;
}

/* title bar */
.titlebar {
  display: grid;
  grid-template-columns: 1fr auto 1fr;
  align-items: center;
  height: 34px;
  padding: 0 10px 2px;
  background: #f4f5f6;
}

.titlebar h1 {
  margin: 0;
  color: #3c3c3c;
  font-size: 18px;
  line-height: 24px;
  font-weight: 600;
}

.lights {
  display: flex;
  gap: 11px;
}

.light {
  width: 16px;
  height: 16px;
  border-radius: 50%;
}

.close {
  background: radial-gradient(circle, #6b0d08 3px, #ed6a5e 3px);
}

.minimize {
  background: #f5bf4f;
}

.zoom {
  background: #61c554;
}

/* toolbars */
.toolbar {
  display: flex;
  align-items: center;
  height: 48px;
  padding-left: 1px;
  border-top: 1px solid #dcdcdc;
  border-bottom: 1px solid #a6a6a6;
  background: linear-gradient(#ececec, #c8c8c8);
}

.toolbar + .toolbar {
  border-top-color: #f7f7f7;
}

.grip {
  width: 12px;
  height: 26px;
  background: repeating-linear-gradient(#8f8f8f 0 2px, transparent 2px 8px) 8px 0 / 2px 26px no-repeat;
}

.sep {
  width: 13px;
  height: 42px;
  background: repeating-linear-gradient(#7c7c7c 0 2px, transparent 2px 4px) 6px 0 / 1px 42px no-repeat;
}

.tool,
.menu {
  display: flex;
  align-items: center;
  justify-content: center;
  width: 51px;
  height: 40px;
  --body: #f0da30;
  --edge: #e62020;
  --coil: #edd400;
}

.tool:nth-child(odd) {
  width: 50px;
}

.menu {
  justify-content: flex-start;
  gap: 1px;
  width: 63px;
  padding-left: 15px;
}

.sub {
  --body: #ea2424;
  --edge: #5588c4;
  --coil: #4a7ebf;
}

.icon {
  width: 32px;
  height: 32px;
}

.off .icon {
  opacity: .55;
}

.caret {
  width: 10px;
  height: 6px;
  margin-top: 15px;
  fill: none;
  stroke: #111;
  stroke-width: 2;
}

.off .caret {
  stroke: #999;
}

/* drop-downs */
.combo {
  position: relative;
  display: flex;
  align-items: center;
  width: 237px;
  height: 27px;
  border-radius: 7px;
  background: #fff;
  box-shadow: 0 1px 2px rgba(0, 0, 0, .3);
}

.combo.wide {
  width: 257px;
}

.combo select {
  width: 100%;
  height: 27px;
  padding-left: 11px;
  appearance: none;
  outline: 0;
}

.combo.workbench {
  width: 246px;
  margin: 0 12px 3px 11px;
}

.workbench select {
  padding-left: 38px;
}

.wb-icon {
  position: absolute;
  left: 13px;
  width: 20px;
  height: 20px;
}

.updown {
  position: absolute;
  right: 3px;
  width: 21px;
  height: 22px;
  border-radius: 5px;
  background: linear-gradient(#2e93ff, #0a7aff);
  pointer-events: none;
}

.updown svg {
  display: block;
  fill: none;
  stroke: #fff;
  stroke-width: 2;
  stroke-linecap: round;
}

/* work area */
.work {
  display: flex;
  flex: 1;
}

.dock {
  display: flex;
  flex-direction: column;
  flex: 0 0 632px;
  border-right: 2px solid #a8a8a8;
}

.dock-tabs,
.doc-tabs {
  display: flex;
  justify-content: center;
  height: 28px;
}

.dock-tabs {
  padding: 2px 0 0 2px;
  background: linear-gradient(#ebebeb 14px, #e3e3e3 14px);
}

.seg {
  display: flex;
  align-items: center;
  height: 26px;
  border-radius: 7px 0 0 7px;
  background: #fff;
  box-shadow: 0 1px 1px rgba(0, 0, 0, .15);
}

.seg.active {
  border-radius: 0 7px 7px 0;
  background: linear-gradient(#2a91ff, #067aff);
  color: #fff;
}

.model-tab {
  width: 79px;
  padding-left: 13px;
}

.tasks-tab {
  gap: 8px;
  width: 135px;
  padding-left: 16px;
}

.pencil {
  width: 22px;
  height: 26px;
}

.dock-title {
  display: flex;
  align-items: center;
  gap: 11px;
  height: 25px;
  padding-right: 1px;
}

.dock-title h2 {
  flex: 1;
  margin: 0;
  padding-left: 18px;
  font-size: 17px;
  line-height: 24px;
  font-weight: 400;
  text-align: center;
}

.dock-btn {
  width: 21px;
  height: 21px;
  border: 1px solid #a4a4a4;
  background: #f2f2f2;
}

.dock-btn svg {
  display: block;
  fill: none;
  stroke: #7c7c7c;
  stroke-width: 2;
}

.panel {
  flex: 1;
  padding: 26px 32px 0 17px;
  border: 2px solid #bdbdbd;
  border-width: 3px 2px 3px 3px;
  background: #d8dde5;
}

.actions {
  display: flex;
  justify-content: center;
  gap: 21px;
  padding-left: 17px;
}

.push {
  width: 90px;
  height: 27px;
  border-radius: 7px;
  background: #fff;
  box-shadow: 0 1px 2px rgba(0, 0, 0, .25);
}

.push.primary {
  background: linear-gradient(#2a91ff, #067aff);
  color: #fff;
}

.section {
  display: flex;
  align-items: center;
  gap: 3px;
  margin: 33px 0 0;
  color: #8790b0;
  font-size: 14px;
  line-height: 24px;
  font-weight: 700;
}

.section svg {
  width: 21px;
  height: 21px;
}

.fields {
  padding: 34px 0 0 31px;
}

.row {
  display: flex;
  align-items: center;
  height: 27px;
}

.row label {
  flex: 0 0 279px;
}

.group .row label {
  flex-basis: 259px;
}

.length-row {
  margin: 19px 0 10px;
}

.spin {
  display: flex;
  align-items: center;
  gap: 3px;
  margin-left: -1px;
}

.entry {
  position: relative;
  display: flex;
  width: 242px;
  height: 26px;
  border: 1px solid #cfd2d8;
  border-bottom: 2px solid #b4b7bc;
  background: #fff;
}

.entry input {
  width: 100%;
  padding: 2px 0 0 1px;
  outline: 0;
}

.entry input::selection {
  background: #b3d7ff;
  color: #111;
}

.fx {
  position: absolute;
  top: -2px;
  right: 1px;
  width: 20px;
  height: 20px;
}

.fx circle {
  fill: #c3cedb;
  stroke: #7d96b4;
  stroke-width: 2;
}

.fx text {
  fill: #3f6da5;
  font: italic 9px "Liberation Sans", sans-serif;
  text-anchor: middle;
}

.stepper {
  display: flex;
  flex-direction: column;
  width: 17px;
  height: 28px;
  border-radius: 7px;
  background: #fff;
  box-shadow: 0 0 2px rgba(0, 0, 0, .35);
}

.stepper button {
  display: flex;
  flex: 1;
  align-items: center;
  justify-content: center;
}

.stepper button + button {
  border-top: 1px solid #d8d8d8;
}

.stepper svg {
  width: 10px;
  height: 6px;
  fill: none;
  stroke: #222;
  stroke-width: 2;
}

.focused {
  gap: 5px;
  margin-left: 2px;
}

.focused .entry {
  width: 243px;
  box-shadow: 0 0 0 5px #86aeea;
}

.focused .stepper {
  width: 15px;
}

.check {
  display: flex;
  align-items: center;
  gap: 6px;
  height: 28px;
}

.check input {
  width: 18px;
  height: 18px;
  border-radius: 4px;
  appearance: none;
  background: #fff;
  box-shadow: 0 0 2px rgba(0, 0, 0, .3);
}

.check input:checked {
  background: url("data:image/svg+xml,%3Csvg xmlns='http://www.w3.org/2000/svg' viewBox='0 0 18 18'%3E%3Cpath d='M4 10L8 14L14 4' fill='none' stroke='white' stroke-width='2'/%3E%3C/svg%3E"), linear-gradient(#2a91ff, #067aff);
}

.legend {
  margin-top: 19px;
  padding-left: 9px;
  font-size: 15px;
  line-height: 19px;
}

.group {
  height: 131px;
  padding: 14px 19px;
  border: 1px solid #cacfd7;
  border-radius: 5px;
  background: #d1d5dd;
}

.group .row {
  margin-bottom: 20px;
}

.taper-row {
  margin-top: 24px;
}

hr {
  height: 2px;
  margin: 14px 0 13px;
  border: 0;
  border-top: 1px solid #c4c8cf;
  background: #fff;
}

/* 3D view */
.mdi {
  display: flex;
  flex: 1;
  flex-direction: column;
  min-width: 0;
}

.view {
  position: relative;
  flex: 1;
  background: linear-gradient(#333365, #9898ab);
}

.scene {
  position: absolute;
  width: 100%;
  height: 100%;
}

.navcube {
  position: absolute;
  top: 0;
  right: 0;
  width: 100px;
  height: 100px;
}

.cube-text {
  fill: #8080ae;
  font: 700 6px Inter, sans-serif;
  text-anchor: middle;
}

.axes {
  position: absolute;
  right: 6px;
  bottom: 19px;
  width: 44px;
  height: 56px;
}

.axes text {
  fill: #111;
  font: 8px Inter, sans-serif;
}

.doc-tabs {
  border-top: 1px solid #fafafa;
  background: linear-gradient(#e3e3e3 12px, #ebebeb 12px);
}

.doc {
  gap: 9px;
  width: 97px;
  padding: 0 7px;
}

.doc.active {
  gap: 20px;
  width: 240px;
  padding: 0 11px;
}

.tab-close svg {
  display: block;
  width: 12px;
  height: 12px;
  fill: none;
  stroke: #555;
  stroke-width: 1;
}

.active .tab-close svg {
  stroke: #fff;
}

.doc-icon {
  width: 16px;
  height: 21px;
}

.doc.active .tab-name {
  margin-left: -7px;
}

/* status bar */
.status {
  display: flex;
  align-items: center;
  height: 53px;
  padding: 0 47px 2px 3px;
  border-top: 2px solid #adadad;
  background: linear-gradient(#ececec, #b4b4b4);
}

.message {
  flex: 1;
}

.nav-style {
  display: flex;
  align-items: center;
  gap: 10px;
}

.nav-style svg {
  width: 18px;
  height: 18px;
  fill: none;
  stroke: #333;
  stroke-width: 2;
}

.size {
  width: 192px;
  margin-left: 76px;
}
</style>
